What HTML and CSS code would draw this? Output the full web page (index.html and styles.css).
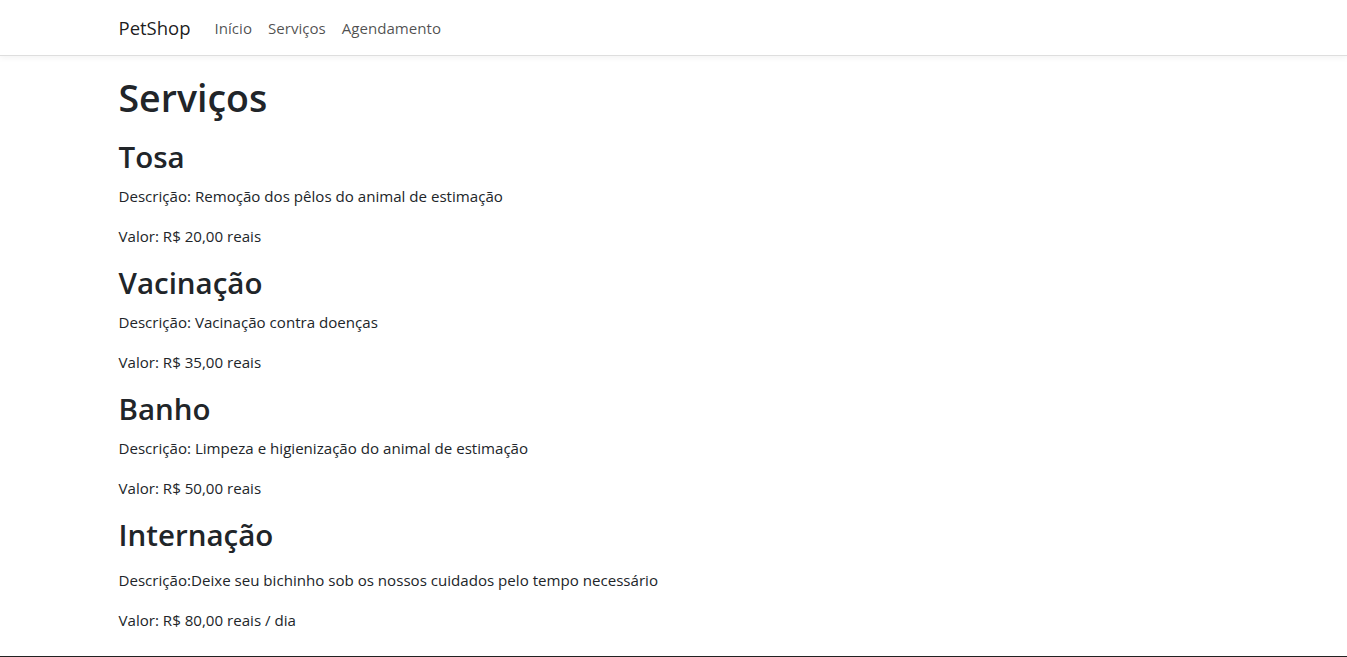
FILE: index.html
```html
<!DOCTYPE html>
<html lang="pt-BR">
<head>
<meta charset="utf-8">
<title>PetShop - Serviços</title>
<link rel="stylesheet" href="styles.css">
</head>
<body>
<nav class="navbar">
  <div class="container nav-inner">
    <a class="brand" href="#">PetShop</a>
    <ul class="nav-links">
      <li><a class="nav-link" href="#">Início</a></li>
      <li><a class="nav-link" href="#">Serviços</a></li>
      <li><a class="nav-link" href="#">Agendamento</a></li>
    </ul>
  </div>
</nav>
<main class="container content">
  <h1 class="title">Serviços</h1>
  <section class="service">
    <h2>Tosa</h2>
    <p>Descrição: Remoção dos pêlos do animal de estimação</p>
    <p>Valor: R$ 20,00 reais</p>
  </section>
  <section class="service">
    <h2>Vacinação</h2>
    <p>Descrição: Vacinação contra doenças</p>
    <p>Valor: R$ 35,00 reais</p>
  </section>
  <section class="service">
    <h2>Banho</h2>
    <p>Descrição: Limpeza e higienização do animal de estimação</p>
    <p>Valor: R$ 50,00 reais</p>
  </section>
  <section class="service service-last">
    <h2>Internação</h2>
    <p>Descrição:Deixe seu bichinho sob os nossos cuidados pelo tempo necessário</p>
    <p>Valor: R$ 80,00 reais / dia</p>
  </section>
</main>
<footer class="footer"></footer>
</body>
</html>
```

FILE: styles.css
```css
* { box-sizing: border-box; }
html, body { margin: 0; padding: 0; }
body {
  font-family: "Open Sans", "Noto Sans", Arial, sans-serif;
  font-size: 15.1px;
  line-height: 24px;
  color: #212529;
  background: #fff;
}
.container {
  width: 1140px;
  margin: 0 auto;
  padding: 0 15px;
}
.navbar {
  background: #fff;
  border-bottom: 1px solid #dedede;
  box-shadow: 0 2px 6px rgba(0,0,0,0.05);
  padding: 8px 0;
  height: 56px;
}
.nav-inner {
  display: flex;
  align-items: center;
}
.brand {
  font-size: 18.5px;
  line-height: 30px;
  padding: 5px 0;
  margin-right: 16px;
  color: rgba(0,0,0,0.9);
  text-decoration: none;
}
.nav-links {
  display: flex;
  list-style: none;
  margin: 0;
  padding: 0;
}
.nav-link {
  display: block;
  padding: 8px;
  color: rgba(0,0,0,0.7);
  text-decoration: none;
}
.content {
  padding-top: 18px;
  padding-bottom: 8px;
}
h1, h2 {
  font-weight: 600;
  margin: 0 0 8px;
}
.title {
  font-size: 37.5px;
  line-height: 48px;
  margin-bottom: 16px;
}
h2 {
  font-size: 29.5px;
  line-height: 38px;
}
p { margin: 0 0 16px; }
.service-last h2 { margin-bottom: 14px; }
.footer {
  height: 40px;
  background: #222;
}
```
